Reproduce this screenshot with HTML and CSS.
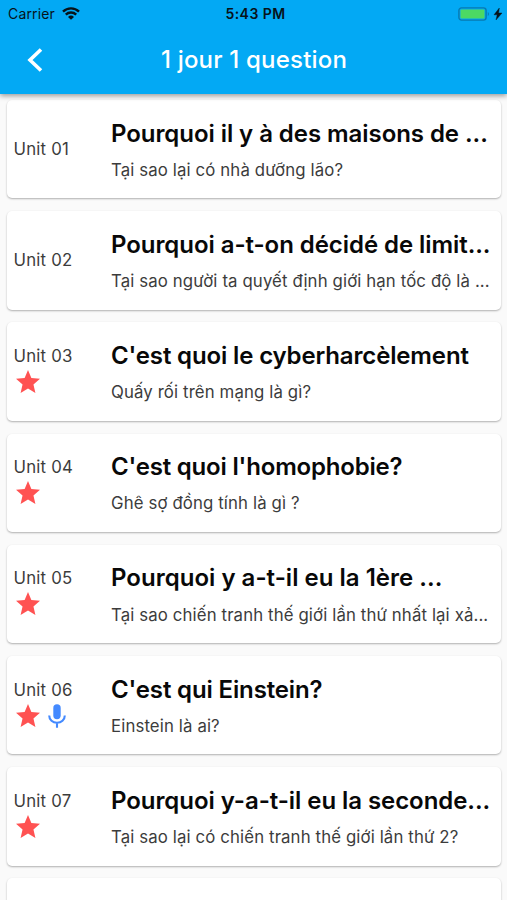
FILE: index.html
```html
<!DOCTYPE html>
<html lang="fr">
<head>
<meta charset="utf-8">
<title>1 jour 1 question</title>
<link rel="stylesheet" href="styles.css">
</head>
<body>
<svg class="defs" width="0" height="0">
  <symbol id="star" viewBox="2 2 20 19"><path d="M12 17.27 18.18 21l-1.64-7.03L22 9.24l-7.19-.61L12 2 9.19 8.63 2 9.24l5.46 4.73L5.82 21z"/></symbol>
  <symbol id="mic" viewBox="0 0 18 24"><path d="M5.3 4a3.7 3.7 0 0 1 7.4 0v7.5a3.7 3.7 0 0 1-7.4 0z"/><path d="M1.2 11.5c0 4.3 3.5 7.3 7.8 7.3s7.8-3 7.8-7.3M9 18.8v5" fill="none" stroke="currentColor" stroke-width="2.1"/></symbol>
</svg>
<header class="top">
  <div class="status">
    <div class="carrier"><span>Carrier</span>
      <svg class="wifi" viewBox="0 0 18 13"><g fill="none" stroke="#07131a" stroke-width="2.4"><path d="M1 4.7a11.4 11.4 0 0 1 16 0"/><path d="M3.8 7.7a7.4 7.4 0 0 1 10.4 0"/></g><path d="M6 9.9a4.3 4.3 0 0 1 6 0L9 12.8z" fill="#07131a"/></svg>
    </div>
    <span class="clock">5:43 PM</span>
    <div class="power">
      <svg class="battery" viewBox="0 0 32 14"><rect x=".9" y=".9" width="27.2" height="12.2" rx="2.6" fill="none" stroke="#087ab0" stroke-width="1.4"/><rect x="2.5" y="2.5" width="24" height="9" rx="1" fill="#4cd964"/><path d="M29.8 5v4c1.5-.5 1.5-3.500 0-4z" fill="#087ab0"/></svg>
      <svg class="bolt" viewBox="0 0 8 12"><path d="M5.300 0 0 6.800h3.200L2 12l6-7H4.600z" fill="#07131a" stroke="#07131a" stroke-width=".4"/></svg>
    </div>
  </div>
  <div class="bar">
    <svg class="back" viewBox="0 0 16 24"><path d="M14 1.500 3 12l11 10.500" fill="none" stroke="#fff" stroke-width="3.600"/></svg>
    <h1>1 jour 1 question</h1>
  </div>
</header>
<main class="list">
  <article class="card"><div class="unit"><span>Unit 01</span></div><div class="body"><h2>Pourquoi il y à des maisons de ...</h2><p>Tại sao lại có nhà dưỡng lão?</p></div></article>
  <article class="card"><div class="unit"><span>Unit 02</span></div><div class="body"><h2>Pourquoi a-t-on décidé de limit...</h2><p>Tại sao người ta quyết định giới hạn tốc độ là ...</p></div></article>
  <article class="card"><div class="unit"><span>Unit 03</span><div class="icons"><svg class="star"><use href="#star"/></svg></div></div><div class="body"><h2 class="tight">C'est quoi le cyberharcèlement</h2><p>Quấy rối trên mạng là gì?</p></div></article>
  <article class="card"><div class="unit"><span>Unit 04</span><div class="icons"><svg class="star"><use href="#star"/></svg></div></div><div class="body"><h2 class="tighter">C'est quoi l'homophobie?</h2><p>Ghê sợ đồng tính là gì ?</p></div></article>
  <article class="card"><div class="unit"><span>Unit 05</span><div class="icons"><svg class="star"><use href="#star"/></svg></div></div><div class="body"><h2 class="loose">Pourquoi y a-t-il eu la 1ère ...</h2><p>Tại sao chiến tranh thế giới lần thứ nhất lại xả...</p></div></article>
  <article class="card"><div class="unit"><span>Unit 06</span><div class="icons"><svg class="star"><use href="#star"/></svg><svg class="mic"><use href="#mic"/></svg></div></div><div class="body"><h2 class="tight">C'est qui Einstein?</h2><p>Einstein là ai?</p></div></article>
  <article class="card"><div class="unit"><span>Unit 07</span><div class="icons"><svg class="star"><use href="#star"/></svg></div></div><div class="body"><h2>Pourquoi y-a-t-il eu la seconde...</h2><p>Tại sao lại có chiến tranh thế giới lần thứ 2?</p></div></article>
  <article class="card"></article>
</main>
</body>
</html>
```
FILE: styles.css
```css
* { box-sizing: border-box; }
body {
  margin: 0;
  height: 900px;
  overflow: hidden;
  display: flex;
  flex-direction: column;
  background: #fafafa;
  font-family: Inter, "Liberation Sans", sans-serif;
}
h1, h2, p { margin: 0; }
.defs { position: absolute; }
.top {
  flex: none;
  height: 94px;
  background: #03a9f4;
  box-shadow: 0 2px 5px rgba(0, 0, 0, .38);
  z-index: 1;
}
.status {
  height: 27px;
  display: grid;
  grid-template-columns: 1fr auto 1fr;
  align-items: center;
  padding: 0 5px 0 8px;
  color: #07131a;
  font-size: 14px;
}
.carrier { display: flex; align-items: center; gap: 7px; letter-spacing: .15px; }
.wifi { width: 18px; height: 13px; }
.clock { font-weight: 600; letter-spacing: .45px; margin-right: -1px; }
.power { display: flex; justify-content: flex-end; align-items: center; gap: 4px; }
.battery { width: 32px; height: 14px; }
.bolt { width: 8px; height: 12px; overflow: visible; }
.bar {
  height: 66px;
  display: grid;
  grid-template-columns: 48px 1fr 48px;
  align-items: center;
}
.back { width: 16px; height: 24px; margin-left: 27px; }
h1 {
  color: #fff;
  text-align: center;
  font-size: 24px;
  line-height: 30px;
  font-weight: 500;
  letter-spacing: .2px;
  padding-left: 1px;
  white-space: nowrap;
}
.list {
  flex: 1;
  min-height: 0;
  overflow: hidden;
  display: flex;
  flex-direction: column;
  gap: 12.8px;
  padding: 6px 6px 0 7px;
}
.card {
  flex: none;
  height: 98.4px;
  display: flex;
  align-items: center;
  padding-left: 6px;
  background: #fff;
  border-radius: 5px;
  box-shadow: 0 1px 2px rgba(0, 0, 0, .3);
}
.unit {
  width: 98px;
  flex: none;
  padding-left: .5px;
  color: #3c3c3c;
  font-size: 16.8px;
  line-height: 20px;
  letter-spacing: .2px;
}
.icons { display: flex; gap: 8px; padding-left: 2.5px; height: 31px; }
.star { width: 24px; height: 23px; margin-top: 4px; fill: #ff5252; }
.mic { width: 18px; height: 24px; margin-top: 4px; color: #448aff; fill: #448aff; }
.body { height: 98px; padding-top: 17.4px; }
h2 {
  color: #080808;
  font-size: 24px;
  line-height: 32px;
  font-weight: 600;
  letter-spacing: -.06px;
  white-space: nowrap;
}
.tight { letter-spacing: -.14px; }
.tighter { letter-spacing: -.19px; }
.loose { letter-spacing: .02px; }
p {
  margin-top: 9.2px;
  color: #3c3c3c;
  font-size: 16.8px;
  line-height: 22px;
  letter-spacing: .12px;
  white-space: nowrap;
}
```
